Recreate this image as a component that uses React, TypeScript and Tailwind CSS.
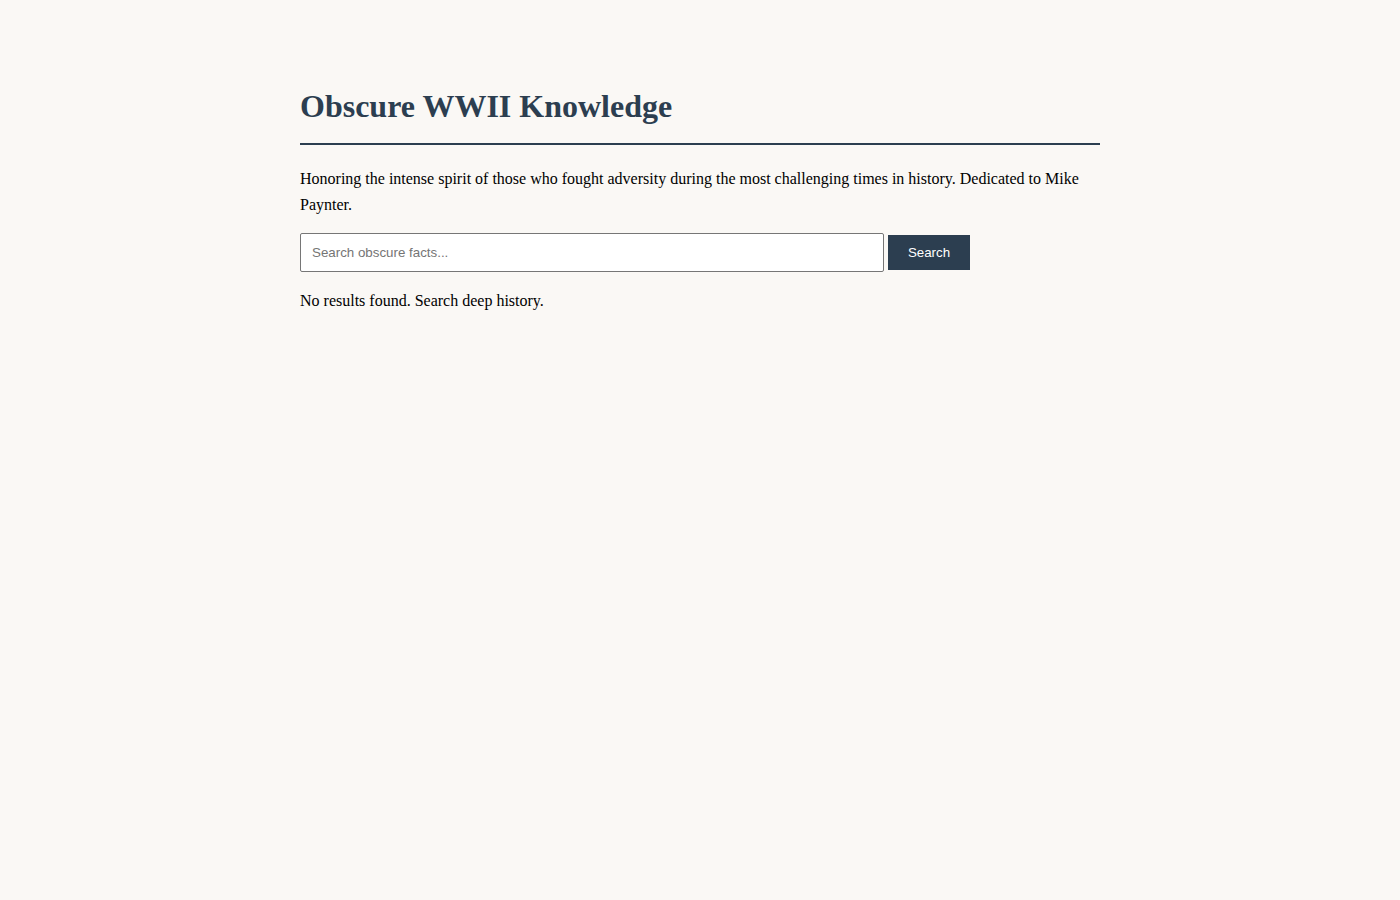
export default function App() {
  return (
    <div className="min-h-screen w-full bg-[#faf8f5]" style={{ fontFamily: '"Liberation Serif", serif' }}>
      <div className="mx-auto w-[800px] pt-[88px]">
        <h1 className="border-b-2 border-[#2c3e50] pb-[18px] text-[32px] font-bold leading-[37px] text-[#2c3e50]">
          Obscure WWII Knowledge
        </h1>
        <p className="mt-[21px] text-[16px] leading-[26px] text-black">
          Honoring the intense spirit of those who fought adversity during the most challenging times in history. Dedicated to Mike Paynter.
        </p>
        <div className="mt-[15px] flex items-center gap-[4px]">
          <input
            type="text"
            placeholder="Search obscure facts..."
            className="h-[39px] w-[584px] rounded-[2px] border border-[#767676] bg-white px-[11px] text-[13.33px] text-black placeholder:text-[#757575] outline-none"
            style={{ fontFamily: '"Liberation Sans", Arial, sans-serif' }}
          />
          <button
            className="h-[35px] w-[82px] bg-[#2c3e50] text-[13.33px] text-white"
            style={{ fontFamily: '"Liberation Sans", Arial, sans-serif' }}
          >
            Search
          </button>
        </div>
        <p className="mt-[16px] text-[16px] leading-[26px] text-black">No results found. Search deep history.</p>
      </div>
    </div>
  );
}
